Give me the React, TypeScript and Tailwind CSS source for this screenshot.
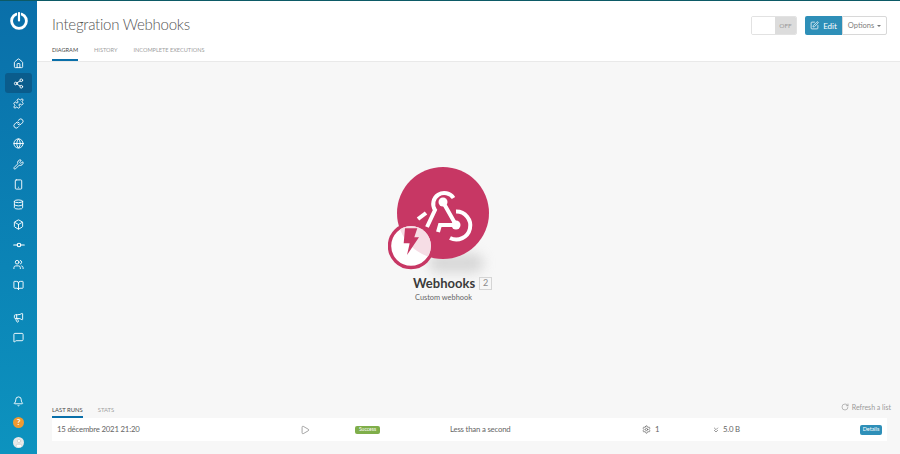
import { House, Share2, Puzzle, Link, Globe, Wrench, Smartphone, Database, Box, GitCommitHorizontal, Users, BookOpen, Megaphone, MessageSquare, Bell, Play, Settings, ChevronsDown, RotateCw, SquarePen, User } from "lucide-react";

const font = { fontFamily: 'Lato, "Noto Sans", sans-serif' };

function NavItem({ icon: Icon, active, size = 11 }: { icon: typeof House; active?: boolean; size?: number }) {
  return (
    <div className={`flex h-[20.2px] w-[27px] items-center justify-center rounded-[3px] ${active ? "bg-[#0a5c8c]" : ""}`}>
      <Icon size={size} strokeWidth={2} color="#ffffff" />
    </div>
  );
}

function Logo() {
  return (
    <svg width="22" height="22" viewBox="0 0 22 22" fill="none">
      <circle cx="11" cy="12" r="7.4" stroke="#fff" strokeWidth="2.8" />
      <rect x="9" y="2.5" width="4" height="11" fill="#0a6fa9" />
      <rect x="9.9" y="3" width="2.2" height="9.5" rx="1" fill="#fff" />
    </svg>
  );
}

function WebhookNode() {
  return (
    <div className="absolute left-[351px] top-[105px] h-[150px] w-[120px]">
      <div className="absolute left-[40px] top-[86px] h-[20px] w-[56px] rounded-full bg-[#c4c4c4] opacity-60 blur-[6px]" />
      <svg className="absolute left-0 top-0" width="104" height="106" viewBox="0 0 104 106" fill="none">
        <defs>
          <clipPath id="inner">
            <circle cx="23" cy="79" r="20" />
          </clipPath>
        </defs>
        <circle cx="55" cy="46" r="46" fill="#c73764" />
        <g stroke="#fff" strokeWidth="4" fill="none">
          <path d="M39 60 L47 43 A11 11 0 1 1 65.5 31" />
          <path d="M55 35 L68 58 L52 58 L50 65" />
          <path d="M68 44.5 A14 14 0 1 1 62 71" />
          <path d="M30 52 L38 46" />
        </g>
        <circle cx="55" cy="35" r="4.5" fill="#fff" />
        <circle cx="68" cy="58" r="4.5" fill="#fff" />
        <circle cx="23" cy="79" r="21.5" fill="#ffffff" stroke="#c73764" strokeWidth="3.4" />
        <g clipPath="url(#inner)">
          <circle cx="55" cy="46" r="46" fill="#f6dde5" />
        </g>
        <path d="M17 61.3 L29.3 61.3 L26.3 70.3 L31 70.3 L19 88 L21.7 76.3 L15.7 76.3 Z" fill="#c73764" />
      </svg>
      <div className="absolute left-[25px] top-[107px] flex items-center gap-[4px]">
        <span className="text-[13px] font-bold leading-[18px] text-[#3b3b3b]">Webhooks</span>
        <span className="flex h-[13px] w-[13px] items-center justify-center border border-[#d5d5d5] text-[9px] text-[#8a8a8a]">2</span>
      </div>
      <div className="absolute left-[27px] top-[125px] whitespace-nowrap text-[7.4px] leading-[12px] text-[#666666]">Custom webhook</div>
    </div>
  );
}

export default function App() {
  return (
    <div style={font} className="flex h-[454px] w-[900px] flex-col overflow-hidden bg-[#f7f7f7]">
      <div className="h-px bg-[#0c5a66]" />
      <div className="flex min-h-0 flex-1">
        <aside className="flex w-[37px] flex-col items-center bg-gradient-to-b from-[#0a6fa9] to-[#0d93bf] pt-[8px] pb-[6px]">
          <Logo />
          <div className="mt-[22px] flex flex-col items-center">
            <NavItem icon={House} />
            <NavItem icon={Share2} active />
            <NavItem icon={Puzzle} />
            <NavItem icon={Link} />
            <NavItem icon={Globe} />
            <NavItem icon={Wrench} />
            <NavItem icon={Smartphone} />
            <NavItem icon={Database} />
            <NavItem icon={Box} />
            <NavItem icon={GitCommitHorizontal} size={14} />
            <NavItem icon={Users} />
            <NavItem icon={BookOpen} />
            <div className="mt-[12px]"><NavItem icon={Megaphone} /></div>
            <NavItem icon={MessageSquare} />
          </div>
          <div className="mt-auto flex flex-col items-center gap-[9.5px]">
            <Bell size={11} strokeWidth={2} color="#fff" />
            <div className="flex h-[11px] w-[11px] items-center justify-center rounded-full bg-[#f09a30] text-[8px] font-bold leading-none text-white">?</div>
            <div className="flex h-[11px] w-[11px] items-center justify-center overflow-hidden rounded-full bg-[#e8e8e8]">
              <User size={10} color="#d0d0d0" fill="#ffffff" />
            </div>
          </div>
        </aside>
        <div className="flex min-w-0 flex-1 flex-col">
          <header className="flex h-[61px] shrink-0 flex-col border-b border-[#e9e9e9] bg-white pl-[15px] pr-[13px]">
            <div className="flex h-[44px] items-start justify-between">
              <h1 className="mt-[11px] text-[15px] font-light leading-[24px] tracking-[-0.25px] text-[#555555]">Integration Webhooks</h1>
              <div className="mt-[15px] flex items-center">
                <div className="flex h-[19px] w-[46px] overflow-hidden rounded-[2px] border border-[#e2e2e2]">
                  <div className="w-[23px] bg-white" />
                  <div className="flex flex-1 items-center justify-center bg-[#dcdcdc] text-[6.5px] text-[#9a9a9a]">OFF</div>
                </div>
                <div className="ml-[8px] flex h-[19px] w-[37px] items-center justify-center gap-[4px] rounded-l-[2px] bg-[#2e8fb8] text-[8px] text-white">
                  <SquarePen size={9} />
                  <span>Edit</span>
                </div>
                <div className="flex h-[19px] w-[45px] items-center justify-center gap-[3px] rounded-r-[2px] border border-[#d8d8d8] bg-white text-[7.5px] text-[#808080]">
                  <span>Options</span>
                  <span className="h-0 w-0 border-x-[2.5px] border-t-[2.5px] border-x-transparent border-t-[#777777]" />
                </div>
              </div>
            </div>
            <nav className="flex flex-1 items-stretch gap-[16px] text-[5.6px] text-[#a0a0a0]">
              <div className="flex items-start border-b-2 border-[#0a6fa9] pt-[1px] text-[#4a4a4a]">DIAGRAM</div>
              <div className="pt-[1px]">HISTORY</div>
              <div className="pt-[1px]">INCOMPLETE EXECUTIONS</div>
            </nav>
          </header>
          <main className="relative min-h-0 flex-1">
            <WebhookNode />
          </main>
          <section className="shrink-0 px-[13px] pb-[13px] pl-[15px]">
            <div className="flex items-end justify-between">
              <div className="flex gap-[15px] text-[5.9px] text-[#a0a0a0]">
                <div className="h-[14px] border-b-2 border-[#0a6fa9] pt-[2px] text-[#4a4a4a]">LAST RUNS</div>
                <div className="pt-[2px]">STATS</div>
              </div>
              <div className="mb-[6px] -mr-[4px] flex items-center gap-[3px] text-[7px] text-[#9a9a9a]">
                <RotateCw size={8} />
                <span>Refresh a list</span>
              </div>
            </div>
            <div className="flex h-[23px] items-center bg-white pl-[5px] text-[7.8px] tracking-[-0.2px] text-[#666666]">
              <span className="w-[243px]">15 décembre 2021 21:20</span>
              <span className="w-[55px]"><Play size={10} strokeWidth={1.4} /></span>
              <span className="flex h-[8px] w-[25px] items-center justify-center rounded-[2px] bg-[#7fae4a] text-[5px] tracking-normal text-white">Success</span>
              <span className="ml-[70px] w-[192px]">Less than a second</span>
              <span className="flex w-[70px] items-center gap-[4px]"><Settings size={9} /><span>1</span></span>
              <span className="flex items-center gap-[3px]"><ChevronsDown size={8} /><span>5.0 B</span></span>
              <span className="ml-auto mr-[5px] flex h-[10px] w-[22px] items-center justify-center rounded-[2px] bg-[#2e8fb8] text-[5.5px] tracking-normal text-white">Details</span>
            </div>
          </section>
        </div>
      </div>
    </div>
  );
}
